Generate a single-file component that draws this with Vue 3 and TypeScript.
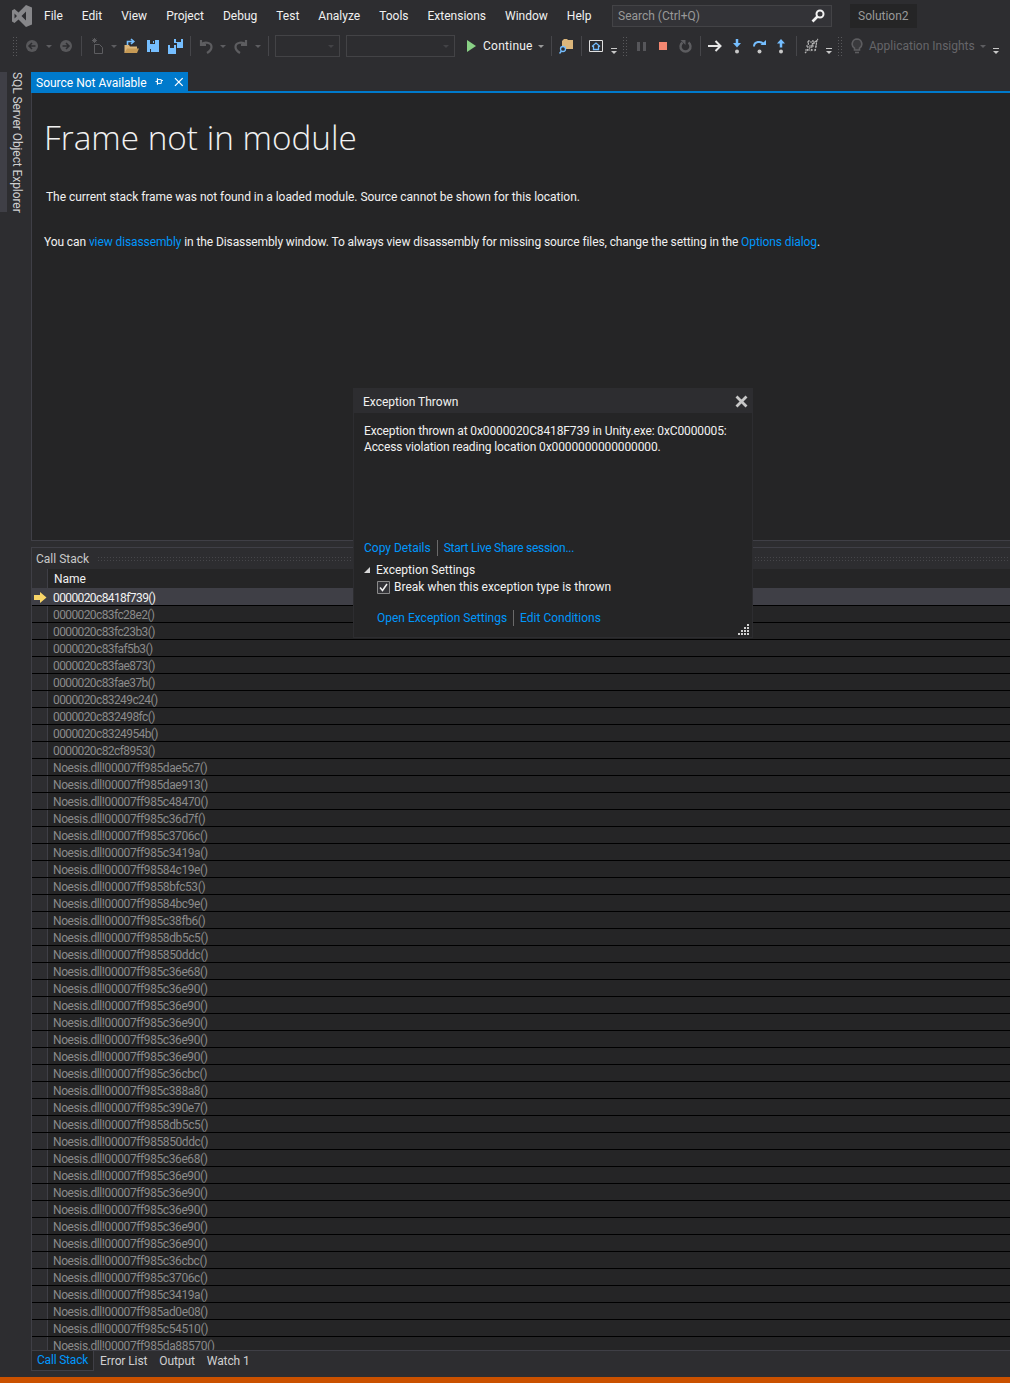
<script setup lang="ts">
const menus = ["File", "Edit", "View", "Project", "Debug", "Test", "Analyze", "Tools", "Extensions", "Window", "Help"];

const prefix = "Noesis.dll!00007ff98";
const frames: string[] = [
  "0000020c8418f739()",
  "0000020c83fc28e2()",
  "0000020c83fc23b3()",
  "0000020c83faf5b3()",
  "0000020c83fae873()",
  "0000020c83fae37b()",
  "0000020c83249c24()",
  "0000020c832498fc()",
  "0000020c8324954b()",
  "0000020c82cf8953()",
  ...[
    "5dae5c7", "5dae913", "5c48470", "5c36d7f", "5c3706c", "5c3419a", "584c19e", "58bfc53", "584bc9e", "5c38fb6",
    "58db5c5", "5850ddc", "5c36e68", "5c36e90", "5c36e90", "5c36e90", "5c36e90", "5c36e90", "5c36cbc", "5c388a8",
    "5c390e7", "58db5c5", "5850ddc", "5c36e68", "5c36e90", "5c36e90", "5c36e90", "5c36e90", "5c36e90", "5c36cbc",
    "5c3706c", "5c3419a", "5ad0e08", "5c54510", "5da88570",
  ].map((a) => `${prefix}${a}()`),
];

const tabs = ["Call Stack", "Error List", "Output", "Watch 1"];
</script>

<template>
  <div class="ide">
    <header class="menubar">
      <svg class="logo" width="20" height="22" viewBox="0 0 20 22">
        <path d="M14 0l6 2.500v17L14 22l-7.500-7.500-4 3.500L0 16.500v-11L2.500 4l4 3.500zM2.500 8.500v5L5 11zM14 6.500L9.500 11l4.500 4.500z" fill="#87878a" fill-rule="evenodd" />
      </svg>
      <nav class="menus">
        <span v-for="m in menus" :key="m">{{ m }}</span>
      </nav>
      <div class="search">
        <span>Search (Ctrl+Q)</span>
        <svg width="14" height="14" viewBox="0 0 14 14">
          <circle cx="9" cy="5" r="3.500" fill="none" stroke="#f1f1f1" stroke-width="2" />
          <path d="M6.500 7.500L1.500 12.500" stroke="#f1f1f1" stroke-width="2.600" />
        </svg>
      </div>
      <div class="solution">Solution2</div>
    </header>

    <div class="toolbar">
      <i class="grip"></i>
      <svg width="14" height="14" viewBox="0 0 14 14"><circle cx="7" cy="7" r="6" fill="#58585b" /><path d="M10.500 7H4.500M7 4L4 7l3 3" stroke="#2d2d30" stroke-width="1.500" fill="none" /></svg>
      <i class="caret dim"></i>
      <svg width="14" height="14" viewBox="0 0 14 14"><circle cx="7" cy="7" r="6" fill="#58585b" /><path d="M3.500 7h6M7 4l3 3-3 3" stroke="#2d2d30" stroke-width="1.500" fill="none" /></svg>
      <i class="sep"></i>
      <svg width="15" height="16" viewBox="0 0 15 16"><path d="M4.500 6.500h5l3 3v6h-8z" fill="none" stroke="#5d5d60" /><path d="M4.500 0v5M2 2.500h5M2.700.7l3.600 3.600M6.300.7L2.700 4.300" stroke="#5d5d60" /></svg>
      <i class="caret dim"></i>
      <svg width="15" height="16" viewBox="0 0 15 16"><path d="M.5 15V7H5l1 1.500h7V15z" fill="#dcb67a" /><path d="M.5 15l2.500-4.500h12L13 15z" fill="#c69a55" /><path d="M3.500 7V3.500h6M7 1l2.800 2.500L7 6" fill="none" stroke="#75beff" stroke-width="1.600" /></svg>
      <svg width="12" height="12" viewBox="0 0 12 12"><path d="M0 0h12v12H0z" fill="#75beff" /><path d="M3 0h5v4H3zM3 9h1v3H3z" fill="#2d2d30" /><path d="M6 1h1v2H6z" fill="#75beff" /></svg>
      <svg width="15" height="15" viewBox="0 0 15 15"><path d="M0 6h8v9H0z" fill="#75beff" /><path d="M6 0h9v9H9V4H6z" fill="#75beff" /><path d="M2 6h4v3H2zM8 0h5v3H8z" fill="#2d2d30" /></svg>
      <i class="sep"></i>
      <svg width="14" height="15" viewBox="0 0 14 15"><path d="M2 1v5h5M2.500 5.500C5 2.500 12.500 3 12.500 8c0 3-2 4.500-4.500 6" fill="none" stroke="#5d5d60" stroke-width="2.200" /></svg>
      <i class="caret dim"></i>
      <svg width="14" height="15" viewBox="0 0 14 15"><path d="M12 1v5H7M11.500 5.500C9 2.500 1.500 3 1.500 8c0 3 2 4.500 4.500 6" fill="none" stroke="#5d5d60" stroke-width="2.200" /></svg>
      <i class="caret dim"></i>
      <i class="sep"></i>
      <div class="combo"><i class="caret dark"></i></div>
      <i></i>
      <div class="combo"><i class="caret dark"></i></div>
      <span class="play-cell">
        <svg width="9" height="12" viewBox="0 0 9 12"><path d="M0 0l9 6-9 6z" fill="#89d185" /></svg>
      </span>
      <span class="label continue">Continue</span>
      <i class="caret mid"></i>
      <i class="sep"></i>
      <svg width="15" height="16" viewBox="0 0 15 16"><path d="M3 3l2-2h3l1 1h5v9H3z" fill="#dcb67a" /><circle cx="4" cy="11" r="2.500" fill="#2d2d30" stroke="#75beff" stroke-width="1.300" /><path d="M2.500 13L.5 15.500" stroke="#75beff" stroke-width="1.500" /></svg>
      <i class="sep"></i>
      <svg width="14" height="12" viewBox="0 0 14 12"><path d="M.5.500h13v11H.500z" fill="none" stroke="#e0e0e0" /><path d="M3 6.500L7 3l4 3.500M4.500 6v3.500h5V6" fill="none" stroke="#75beff" stroke-width="1.300" /></svg>
      <i class="overflow"></i>
      <i class="grip"></i>
      <span class="pause"><b></b><b></b></span>
      <i class="stop"></i>
      <svg width="13" height="14" viewBox="0 0 13 14"><path d="M3.500 3.500a5 5 0 1 0 6 0" fill="none" stroke="#5d5d60" stroke-width="2.400" /><path d="M1.500 1H6.500v5z" fill="#5d5d60" /></svg>
      <i class="sep"></i>
      <svg width="14" height="12" viewBox="0 0 14 12"><path d="M0 6h12.500M7.500 1l5 5-5 5" fill="none" stroke="#e6e6e6" stroke-width="2" /></svg>
      <svg width="8" height="15" viewBox="0 0 8 15"><path d="M4 0v6" stroke="#75beff" stroke-width="2.500" /><path d="M0 4h8L4 8.500z" fill="#75beff" /><circle cx="4" cy="12.500" r="2" fill="#c8c8c8" /></svg>
      <svg width="13" height="15" viewBox="0 0 13 15"><path d="M1 7.500C1 2.500 8 1.500 10.500 5" fill="none" stroke="#75beff" stroke-width="2" /><path d="M7.500 6H13V1z" fill="#75beff" /><circle cx="6.500" cy="12.500" r="2" fill="#c8c8c8" /></svg>
      <svg width="8" height="15" viewBox="0 0 8 15"><path d="M4 8.500V3" stroke="#75beff" stroke-width="2.500" /><path d="M0 4.500h8L4 0z" fill="#75beff" /><circle cx="4" cy="12.500" r="2" fill="#c8c8c8" /></svg>
      <i class="sep"></i>
      <svg width="15" height="16" viewBox="0 0 15 16"><path d="M3 4h10M2 8h11M1 12h10M5 2L3 14M9 2L7 14M13 2l-2 12M1 15L14 1" fill="none" stroke="#b4b4b4" stroke-width="1.200" stroke-dasharray="2 1" /></svg>
      <i class="overflow"></i>
      <i class="grip"></i>
      <span class="bulb-cell">
        <svg width="12" height="16" viewBox="0 0 12 16"><path d="M6 1a5 5 0 0 1 2.500 9.200V12h-5v-1.800A5 5 0 0 1 6 1z" fill="#3a3a3d" stroke="#5d5d60" stroke-width="1.600" /><path d="M4 14.500h4" stroke="#5d5d60" stroke-width="1.600" /></svg>
      </span>
      <span class="label insights">Application Insights</span>
      <i class="caret dim"></i>
      <i class="overflow"></i>
    </div>

    <div class="workspace">
      <aside class="sidebar">
        <div class="vtab"><span>SQL Server Object Explorer</span></div>
      </aside>

      <main class="main">
        <div class="tabstrip">
          <div class="doc-tab">
            <span class="doc-name">Source Not Available</span>
            <svg width="9" height="9" viewBox="0 0 9 9"><path d="M.5 4.500h2M2.500 2.500h4v4h-4zM2.500 1v7M6.500 3.500h2" fill="none" stroke="#fff" /></svg>
            <svg width="10" height="10" viewBox="0 0 10 10"><path d="M1 1l8 8M9 1L1 9" stroke="#fff" stroke-width="1.300" /></svg>
          </div>
        </div>

        <section class="document">
          <h1>Frame not in module</h1>
          <p class="lead">The current stack frame was not found in a loaded module. Source cannot be shown for this location.</p>
          <p class="hint">
            You can <a>view disassembly</a> in the Disassembly window. To always view disassembly for missing source files, change the setting in the <a>Options dialog</a>.
          </p>
        </section>

        <section class="callstack">
          <div class="panel-title">
            <span>Call Stack</span>
            <i class="dots"></i>
          </div>
          <div class="grid-head">
            <div class="gutter"></div>
            <div class="head-name">Name</div>
          </div>
          <div class="rows">
            <div v-for="(f, i) in frames" :key="i" class="row" :class="{ current: i === 0, raw: i < 10 }">
              <div class="gutter">
                <svg v-if="i === 0" width="13" height="11" viewBox="0 0 13 11"><path d="M0 3h6V0l6.500 5.500L6 11V8H0z" fill="#f8d568" /></svg>
              </div>
              <div class="cell">{{ f }}</div>
            </div>
          </div>
        </section>

        <footer class="bottom-tabs">
          <span v-for="(t, i) in tabs" :key="t" :class="{ on: i === 0 }">{{ t }}</span>
        </footer>
      </main>
    </div>

    <div class="statusbar"></div>

    <div class="dialog">
      <div class="dialog-title">
        <span>Exception Thrown</span>
        <svg width="13" height="13" viewBox="0 0 13 13"><path d="M1.500 1.500l10 10M11.500 1.500l-10 10" stroke="#c8c8c8" stroke-width="2.800" /></svg>
      </div>
      <div class="dialog-body">
        <p class="message">
          Exception thrown at 0x0000020C8418F739 in Unity.exe: 0xC0000005:<br />
          Access violation reading location 0x0000000000000000.
        </p>
        <div class="links">
          <a>Copy Details</a><i></i><a class="live">Start Live Share session...</a>
        </div>
        <div class="settings-head"><b class="tri"></b>Exception Settings</div>
        <label class="check">
          <svg width="13" height="13" viewBox="0 0 13 13"><path d="M.5.500h12v12H.500z" fill="#333337" stroke="#8a8a8a" /><path d="M3 6.500l2.500 3L10 3" fill="none" stroke="#f1f1f1" stroke-width="1.500" /></svg>
          Break when this exception type is thrown
        </label>
        <div class="links nested">
          <a>Open Exception Settings</a><i></i><a>Edit Conditions</a>
        </div>
      </div>
      <svg class="resize" width="12" height="12" viewBox="0 0 12 12">
        <path d="M9 0h2v2H9zM6 3h2v2H6zM9 3h2v2H9zM3 6h2v2H3zM6 6h2v2H6zM9 6h2v2H9zM0 9h2v2H0zM3 9h2v2H3zM6 9h2v2H6zM9 9h2v2H9z" fill="#d0d0d0" />
      </svg>
    </div>
  </div>
</template>

<style>
html,
body {
  margin: 0;
  background: #2d2d30;
}
</style>

<style scoped>
.ide {
  position: relative;
  width: 1010px;
  height: 1383px;
  overflow: hidden;
  display: flex;
  flex-direction: column;
  background: #2d2d30;
  color: #f1f1f1;
  font-family: Roboto, "Open Sans", sans-serif;
  font-size: 12px;
}

.menubar {
  height: 32px;
  flex: none;
  display: flex;
  align-items: center;
  padding-left: 12px;
}

.logo {
  flex: none;
}

.menus {
  display: flex;
  gap: 19px;
  margin-left: 12px;
  width: 568px;
}

.search {
  width: 220px;
  height: 22px;
  box-sizing: border-box;
  display: flex;
  align-items: center;
  justify-content: space-between;
  padding: 0 6px 0 5px;
  background: #333337;
  border: 1px solid #434346;
  color: #999;
}

.solution {
  margin-left: 18px;
  padding: 0 8px;
  height: 24px;
  line-height: 24px;
  background: #252526;
  color: #999;
}

.toolbar {
  height: 28px;
  flex: none;
  box-sizing: border-box;
  padding-left: 11px;
  display: grid;
  grid-template-columns:
    7px 28px 6px 28px 2px 30px 4px 30px 14px 30px 1px 29px 6px 29px 6px 14px
    65px 6px 109px 28px 50px 16px 4px 26px 4px 26px 10px 10px 25px 18px 26px 4px
    26px 18px 26px 18px 12px 18px 18px 2px 29px 105px 18px 8px;
  align-items: center;
  justify-items: center;
}

.grip {
  width: 5px;
  height: 20px;
  background-image: radial-gradient(#58585b 0.7px, transparent 0.8px);
  background-size: 3px 3px;
}

.sep {
  width: 1px;
  height: 20px;
  background: #46464a;
}

.caret {
  width: 0;
  height: 0;
  border: 3px solid transparent;
  border-top: 3px solid #c8c8c8;
  border-bottom: 0;
}

.caret.dim {
  border-top-color: #5d5d60;
}

.caret.dark {
  border-top-color: #434346;
}

.caret.mid {
  border-top-color: #999;
}

.overflow {
  width: 6px;
  height: 6px;
  margin-top: 10px;
  border-top: 1px solid #c8c8c8;
  position: relative;
}

.overflow::after {
  content: "";
  position: absolute;
  left: 0;
  top: 2px;
  border: 3px solid transparent;
  border-top: 3px solid #c8c8c8;
  border-bottom: 0;
}

.combo {
  width: 100%;
  height: 22px;
  display: flex;
  align-items: center;
  justify-content: flex-end;
  padding-right: 5px;
  box-sizing: border-box;
  border: 1px solid #434346;
}

.play-cell {
  display: flex;
  justify-self: start;
  padding-left: 12px;
}

.label {
  justify-self: start;
  white-space: nowrap;
}

.continue {
  letter-spacing: 0.25px;
}

.insights {
  color: #656569;
}

.pause {
  display: flex;
  gap: 3px;
}

.pause b {
  width: 3px;
  height: 9px;
  background: #56565a;
}

.stop {
  width: 8px;
  height: 8px;
  background: #f48771;
}

.bulb-cell {
  display: flex;
  padding-left: 5px;
}

.workspace {
  flex: 1;
  min-height: 0;
  display: flex;
}

.sidebar {
  width: 31px;
  flex: none;
  padding-top: 12px;
}

.vtab {
  width: 24px;
  height: 140px;
  box-sizing: border-box;
  border-left: 7px solid #3f3f46;
  padding-left: 3px;
}

.vtab span {
  display: block;
  writing-mode: vertical-rl;
  white-space: nowrap;
  line-height: 14px;
  letter-spacing: -0.08px;
  color: #d0d0d0;
}

.main {
  flex: 1;
  min-width: 0;
  display: flex;
  flex-direction: column;
  padding-bottom: 6px;
}

.tabstrip {
  height: 33px;
  flex: none;
  box-sizing: border-box;
  padding-top: 12px;
  border-bottom: 2px solid #007acc;
}

.doc-tab {
  width: 157px;
  height: 19px;
  box-sizing: border-box;
  padding: 0 4px 0 5px;
  display: flex;
  align-items: center;
  background: #007acc;
  color: #fff;
}

.doc-name {
  width: 123px;
  padding-top: 2px;
  white-space: nowrap;
}

.doc-tab svg + svg {
  margin-left: 11px;
}

.document {
  height: 448px;
  flex: none;
  box-sizing: border-box;
  background: #252526;
  border-left: 1px solid #3f3f46;
  border-bottom: 1px solid #3f3f46;
  padding: 23px 0 0 12px;
}

.document h1 {
  margin: 0;
  font-family: "Open Sans", sans-serif;
  font-size: 33.3px;
  line-height: 42px;
  font-weight: 300;
  color: #f1f1f1;
}

.document p {
  margin: 0;
  line-height: 16px;
}

.lead {
  padding: 31px 0 0 2px;
  letter-spacing: -0.04px;
}

.hint {
  padding-top: 29px;
  letter-spacing: -0.1px;
}

a {
  color: #0097fb;
}

.callstack {
  flex: 1;
  min-height: 0;
  overflow: hidden;
  margin-top: 6px;
  border-top: 1px solid #3f3f46;
  border-left: 1px solid #3f3f46;
  background: #252526;
}

.panel-title {
  height: 21px;
  display: flex;
  align-items: center;
  padding-left: 4px;
  gap: 8px;
  background: #2d2d30;
  color: #c8c8c8;
}

.dots {
  flex: 1;
  height: 5px;
  background-image: radial-gradient(#46464a 0.7px, transparent 0.8px);
  background-size: 3px 3px;
}

.grid-head {
  height: 20px;
  box-sizing: border-box;
  display: flex;
  align-items: stretch;
  background: #252526;
  border-bottom: 1px solid #3f3f46;
}

.gutter {
  width: 16px;
  flex: none;
  box-sizing: border-box;
  display: flex;
  align-items: center;
  padding-left: 2px;
  border-right: 1px solid #3f3f46;
  background: #2d2d30;
}

.head-name {
  padding: 1px 0 0 6px;
  line-height: 19px;
}

.row {
  height: 17px;
  box-sizing: border-box;
  display: flex;
  align-items: stretch;
  border-bottom: 1px solid #000;
  color: #8a8a8a;
  letter-spacing: -0.4px;
}

.row.raw {
  letter-spacing: -0.6px;
}

.row.current {
  background: #3f3f46;
  color: #f1f1f1;
}

.row.current .gutter {
  background: #3f3f46;
}

.cell {
  padding: 1px 0 0 5px;
  line-height: 16px;
  white-space: nowrap;
}

.bottom-tabs {
  height: 20px;
  flex: none;
  display: flex;
  align-items: center;
  border-top: 1px solid #3f3f46;
  color: #d0d0d0;
}

.bottom-tabs span {
  padding: 0 6px;
  line-height: 19px;
  letter-spacing: -0.1px;
}

.bottom-tabs .on {
  padding: 0 5px;
  margin-top: -1px;
  letter-spacing: -0.2px;
  background: #252526;
  color: #0097fb;
  border: 1px solid #3f3f46;
  border-top: 0;
}

.statusbar {
  height: 6px;
  flex: none;
  background: #ca5100;
}

.dialog {
  position: absolute;
  left: 353px;
  top: 388px;
  width: 400px;
  height: 250px;
  box-sizing: border-box;
  border: 1px solid #2d2d30;
  background: #252526;
}

.dialog-title {
  height: 24px;
  display: flex;
  align-items: center;
  justify-content: space-between;
  padding: 1px 4px 0 9px;
  box-sizing: border-box;
  background: #2d2d30;
}

.dialog-body {
  padding: 10px 10px 0;
}

.message {
  margin: 0;
  height: 117px;
  line-height: 16px;
  letter-spacing: -0.12px;
}

.links {
  display: flex;
  align-items: center;
  height: 16px;
}

.links i {
  width: 1px;
  height: 16px;
  margin: 0 6px;
  background: #6a6a6a;
}

.live {
  letter-spacing: -0.27px;
}

.settings-head {
  display: flex;
  align-items: center;
  margin-top: 6px;
  line-height: 16px;
}

.tri {
  width: 0;
  height: 0;
  margin-right: 6px;
  border-left: 6px solid transparent;
  border-bottom: 6px solid #d8d8d8;
}

.check {
  display: flex;
  align-items: center;
  gap: 4px;
  margin: 1px 0 0 13px;
  line-height: 16px;
}

.links.nested {
  margin: 15px 0 0 13px;
}

.resize {
  position: absolute;
  right: 2px;
  bottom: 1px;
}
</style>
